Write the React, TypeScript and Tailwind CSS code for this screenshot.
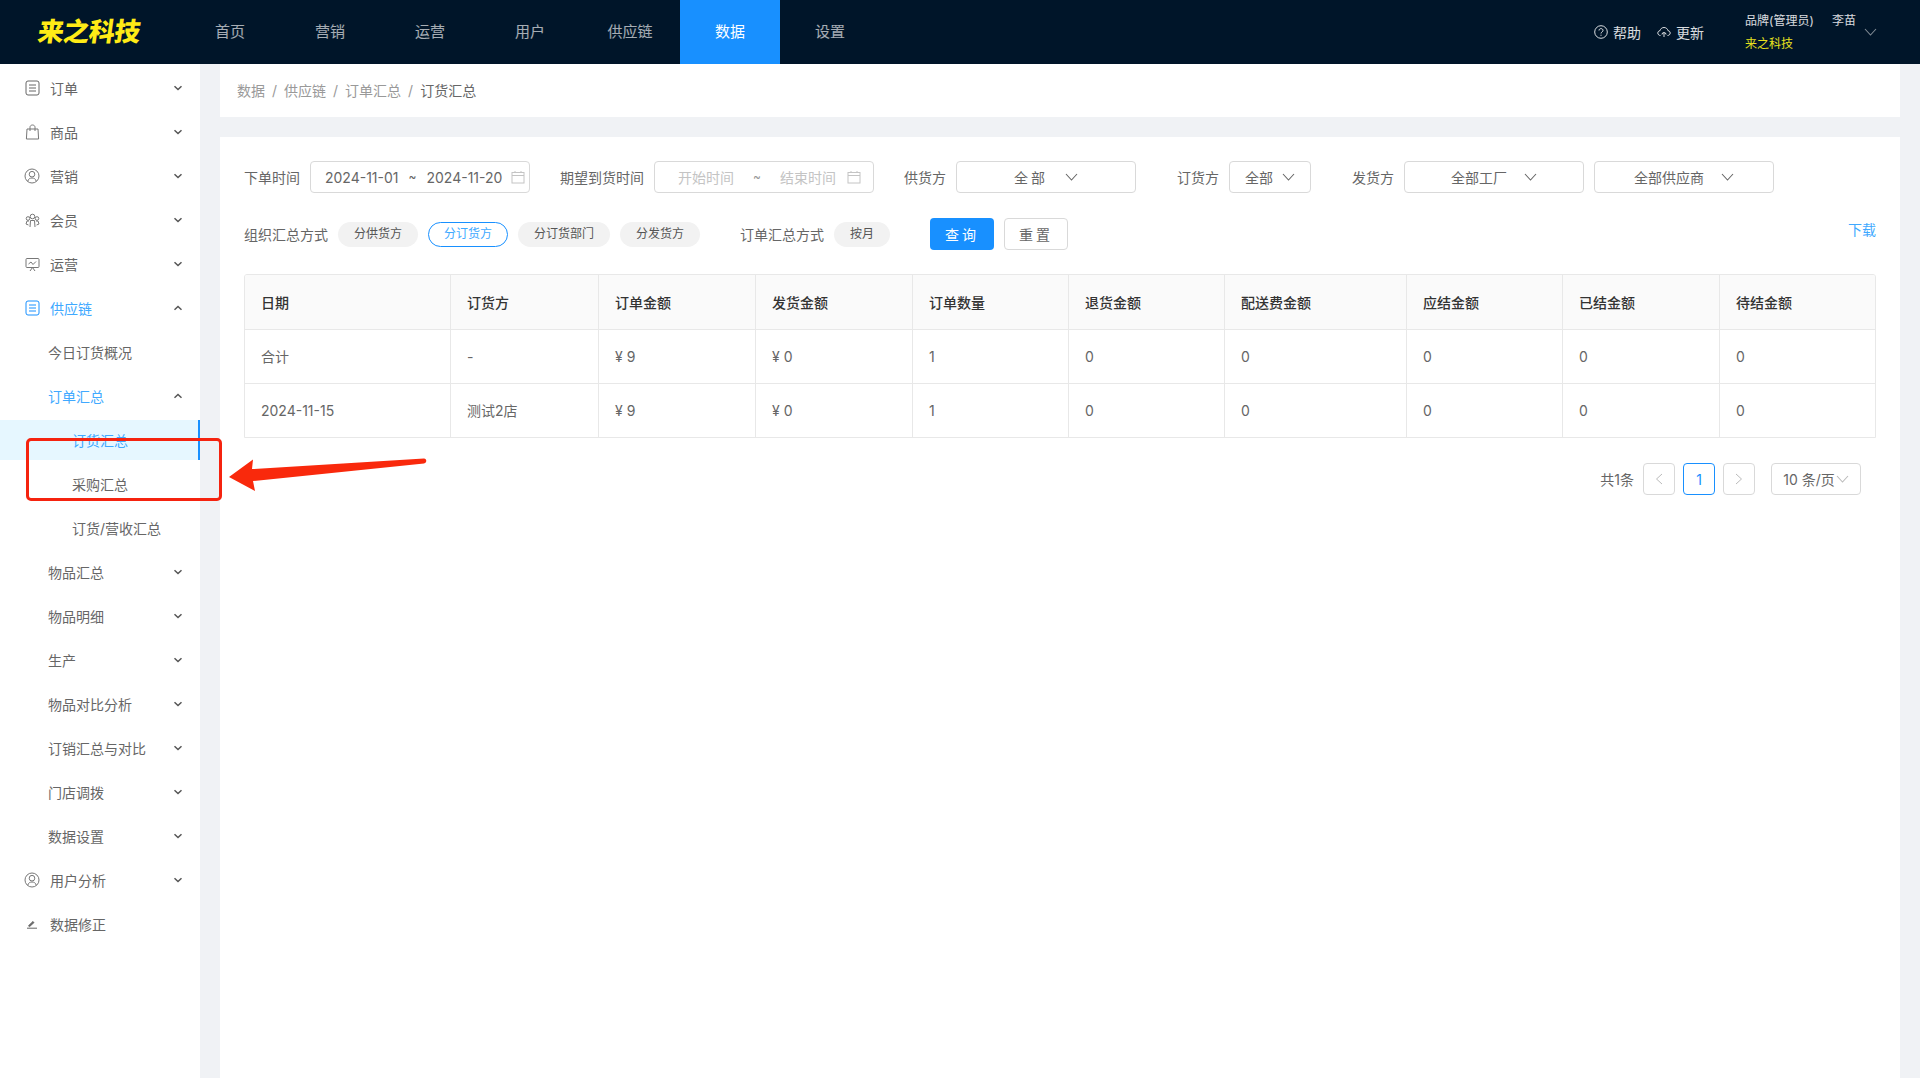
import React from "react";

const font = { fontFamily: 'Inter, "Noto Sans CJK SC", sans-serif' };

const Chevron = ({ up = false }: { up?: boolean }) => (
  <svg width="10" height="6" viewBox="0 0 10 6" className="text-[#555]">
    <path d={up ? "M1.5 4.8 5 1.5l3.5 3.3" : "M1.5 1.2 5 4.5l3.5-3.3"} fill="none" stroke="currentColor" strokeWidth="1.5" />
  </svg>
);

const Caret = ({ className = "text-[#666]" }: { className?: string }) => (
  <svg width="13" height="8" viewBox="0 0 13 8" className={className}>
    <path d="M1 1l5.5 6L12 1" fill="none" stroke="currentColor" strokeWidth="1.1" />
  </svg>
);

const DocIcon = () => (
  <svg width="15" height="16" viewBox="0 0 15 16" fill="none" stroke="currentColor" strokeWidth="1">
    <rect x="1" y="1" width="13" height="14" rx="2" />
    <path d="M4 5h7M4 8h7M4 11h7" />
  </svg>
);
const BagIcon = () => (
  <svg width="15" height="16" viewBox="0 0 15 16" fill="none" stroke="#777" strokeWidth="1">
    <path d="M2 5h11l.6 10H1.4zM5 7V3.2C5 2 6 1 7.5 1S10 2 10 3.2V7" />
  </svg>
);
const UserIcon = () => (
  <svg width="16" height="16" viewBox="0 0 16 16" fill="none" stroke="#777" strokeWidth="1">
    <circle cx="8" cy="8" r="7" />
    <circle cx="8" cy="6.2" r="2.8" />
    <path d="M3.8 13.2C4.4 10.8 6 10 8 10s3.6.8 4.2 3.2" />
  </svg>
);
const GroupIcon = () => (
  <svg width="15" height="15" viewBox="0 0 15 15" fill="none" stroke="#777" strokeWidth="1">
    <circle cx="7.5" cy="3.5" r="2.3" />
    <circle cx="3" cy="5.5" r="1.8" />
    <circle cx="12" cy="5.5" r="1.8" />
    <path d="M5 14l.5-6.5h4L10 14M1 11l1-3h2M14 11l-1-3h-2M1 11l2.5 1M14 11l-2.5 1" />
  </svg>
);
const ScreenIcon = () => (
  <svg width="15" height="15" viewBox="0 0 15 15" fill="none" stroke="#777" strokeWidth="1">
    <rect x="1" y="1.5" width="13" height="9" rx="1" />
    <path d="M3.5 7l2.5-2 2 2.5L11 4.5M5 14l2.5-3.5L10 14" />
  </svg>
);
const EditIcon = () => (
  <svg width="12" height="10" viewBox="0 0 12 10" fill="none" stroke="#666">
    <path d="M1 9.2h10" />
    <path d="M2.5 6.8 7 2.5l1 1-4.300 4z" fill="#666" />
  </svg>
);
const CalendarIcon = () => (
  <svg width="14" height="14" viewBox="0 0 14 14" fill="none" stroke="#c4c4c4">
    <rect x="1" y="2.500" width="12" height="10.500" />
    <path d="M1 5.500h12M4 1v2M10 1v2" />
  </svg>
);

type Item = {
  label: string;
  icon?: React.ReactNode;
  level?: number;
  arrow?: "up" | "down";
  open?: boolean;
  active?: boolean;
};

const menu: Item[] = [
  { label: "订单", icon: <span className="text-[#666] flex"><DocIcon /></span>, arrow: "down" },
  { label: "商品", icon: <BagIcon />, arrow: "down" },
  { label: "营销", icon: <UserIcon />, arrow: "down" },
  { label: "会员", icon: <GroupIcon />, arrow: "down" },
  { label: "运营", icon: <ScreenIcon />, arrow: "down" },
  { label: "供应链", icon: <span className="text-[#1890ff] flex"><DocIcon /></span>, arrow: "up", open: true },
  { label: "今日订货概况", level: 1 },
  { label: "订单汇总", level: 1, arrow: "up", open: true },
  { label: "订货汇总", level: 2, active: true },
  { label: "采购汇总", level: 2 },
  { label: "订货/营收汇总", level: 2 },
  { label: "物品汇总", level: 1, arrow: "down" },
  { label: "物品明细", level: 1, arrow: "down" },
  { label: "生产", level: 1, arrow: "down" },
  { label: "物品对比分析", level: 1, arrow: "down" },
  { label: "订销汇总与对比", level: 1, arrow: "down" },
  { label: "门店调拨", level: 1, arrow: "down" },
  { label: "数据设置", level: 1, arrow: "down" },
  { label: "用户分析", icon: <UserIcon />, arrow: "down" },
  { label: "数据修正", icon: <EditIcon /> },
];

const SideItem = ({ item }: { item: Item }) => {
  const pad = item.level === 2 ? "pl-[72px]" : item.level === 1 ? "pl-[48px]" : "pl-[50px]";
  const color = item.open || item.active ? "text-[#40a9ff]" : "text-[#666]";
  return (
    <div
      className={`relative my-1 flex h-10 items-center pr-[17px] text-[14px] ${pad} ${color} ${
        item.active ? "border-r-2 border-[#1890ff] bg-[#e6f7ff]" : ""
      }`}
    >
      {item.icon && <span className="absolute left-[24px] flex w-4 justify-center">{item.icon}</span>}
      <span className="flex-1">{item.label}</span>
      {item.arrow && <Chevron up={item.arrow === "up"} />}
    </div>
  );
};

const Label = ({ children, className = "" }: { children: React.ReactNode; className?: string }) => (
  <span className={`text-[14px] text-[#666] ${className}`}>{children}</span>
);

const Select = ({ text, width, spaced }: { text: string; width: string; spaced?: boolean }) => (
  <div className={`flex h-8 items-center justify-center gap-[17px] rounded-[4px] border border-[#d9d9d9] text-[14px] text-[#666] ${width}`}>
    <span className={spaced ? "tracking-[3px]" : ""}>{text}</span>
    <Caret />
  </div>
);

const Chip = ({ text, width, active }: { text: string; width: string; active?: boolean }) => (
  <div
    className={`flex h-[25px] items-center justify-center rounded-full text-[12px] ${width} ${
      active ? "border border-[#1890ff] text-[#40a9ff]" : "bg-[#f2f2f2] text-[#555]"
    }`}
  >
    {text}
  </div>
);

const columns = ["日期", "订货方", "订单金额", "发货金额", "订单数量", "退货金额", "配送费金额", "应结金额", "已结金额", "待结金额"];
const rows = [
  ["合计", "-", "¥ 9", "¥ 0", "1", "0", "0", "0", "0", "0"],
  ["2024-11-15", "测试2店", "¥ 9", "¥ 0", "1", "0", "0", "0", "0", "0"],
];
const gridCols = "grid grid-cols-[206px_148px_157px_157px_156px_156px_182px_156px_157px_157px]";

const PageBox = ({ children, active }: { children: React.ReactNode; active?: boolean }) => (
  <div
    className={`flex h-8 w-8 items-center justify-center rounded-[4px] border text-[14px] ${
      active ? "border-[#1890ff] text-[#1890ff]" : "border-[#d9d9d9] text-[#bbb]"
    }`}
  >
    {children}
  </div>
);

export default function App() {
  return (
    <div style={font} className="relative flex h-[1078px] w-full flex-col overflow-hidden bg-[#f0f2f5]">
      <header className="flex h-16 shrink-0 items-center bg-[#001529] text-white">
        <div className="flex w-[180px] justify-center pr-[1px]">
          <span className="origin-center skew-x-[-8deg] text-[26px] leading-none font-black tracking-[-0.5px] text-[#ffeb16]">来之科技</span>
        </div>
        {["首页", "营销", "运营", "用户", "供应链", "数据", "设置"].map((n) => (
          <div
            key={n}
            className={`flex h-16 w-[100px] items-center justify-center text-[15px] ${
              n === "数据" ? "bg-[#1890ff] text-white" : "text-white/65"
            }`}
          >
            {n}
          </div>
        ))}
        <div className="ml-auto flex items-center pr-[43px]">
          <div className="flex items-center gap-[5px] text-[14px] text-white/85">
            <svg width="14" height="14" viewBox="0 0 14 14" fill="none" stroke="currentColor">
              <circle cx="7" cy="7" r="6.300" />
              <path d="M5 5.500C5 4.300 6 3.600 7 3.600s2 .7 2 1.800C9 7 7 7 7 8.500M7 9.700v1.100" />
            </svg>
            帮助
          </div>
          <div className="ml-[16px] flex items-center gap-[5px] text-[14px] text-white/85">
            <svg width="14" height="12" viewBox="0 0 14 12" fill="none" stroke="currentColor">
              <path d="M3.500 9.500C2 9.500.8 8.400.8 7 .8 5.700 1.800 4.800 3 4.700 3.500 2.700 5 1.500 7 1.500s3.500 1.200 4 3.200c1.200.1 2.200 1 2.200 2.300 0 1.400-1.200 2.500-2.700 2.500" />
              <path d="M5 8.500a2 2 0 0 1 4 0M7 7v4" />
            </svg>
            更新
          </div>
          <div className="ml-[41px] flex w-[111px] flex-col gap-[7px] text-[12px] leading-4">
            <div className="flex justify-between text-white/85">
              <span>品牌(管理员)</span>
              <span>李苗</span>
            </div>
            <div className="text-[#e6e01e]">来之科技</div>
          </div>
          <Caret className="ml-[8px] text-white/50" />
        </div>
      </header>

      <div className="flex min-h-0 flex-1">
        <aside className="w-[200px] shrink-0 bg-white">
          {menu.map((m) => (
            <SideItem key={m.label} item={m} />
          ))}
        </aside>

        <main className="flex min-w-0 flex-1 flex-col px-5">
          <div className="flex h-[53px] shrink-0 items-center gap-[7px] bg-white pl-[17px] text-[14px] text-[#999]">
            <span>数据</span>
            <span>/</span>
            <span>供应链</span>
            <span>/</span>
            <span>订单汇总</span>
            <span>/</span>
            <span className="text-[#666]">订货汇总</span>
          </div>

          <section className="mt-5 flex-1 bg-white p-6">
            <div className="flex h-8 items-center">
              <Label className="w-[56px]">下单时间</Label>
              <div className="ml-[10px] flex h-8 w-[220px] items-center rounded-[4px] border border-[#d9d9d9] pl-[14px] pr-[4px] text-[14px] text-[#666]">
                <span>2024-11-01</span>
                <span className="mx-[10px] text-[12px]">~</span>
                <span>2024-11-20</span>
                <span className="ml-auto flex"><CalendarIcon /></span>
              </div>
              <Label className="ml-[30px] w-[84px]">期望到货时间</Label>
              <div className="ml-[10px] flex h-8 w-[220px] items-center rounded-[4px] border border-[#d9d9d9] pl-[23px] pr-[12px] text-[14px] text-[#c4c4c4]">
                <span>开始时间</span>
                <span className="ml-[19px] text-[12px] text-[#999]">~</span>
                <span className="ml-[19px]">结束时间</span>
                <span className="ml-auto flex"><CalendarIcon /></span>
              </div>
              <Label className="ml-[30px] w-[42px]">供货方</Label>
              <div className="ml-[10px]"><Select text="全部" width="w-[180px]" spaced /></div>
              <Label className="ml-[41px] w-[42px]">订货方</Label>
              <div className="ml-[10px]"><Select text="全部" width="w-[82px] !gap-[9px]" /></div>
              <Label className="ml-[41px] w-[42px]">发货方</Label>
              <div className="ml-[10px]"><Select text="全部工厂" width="w-[180px]" /></div>
              <div className="ml-[10px]"><Select text="全部供应商" width="w-[180px]" /></div>
            </div>

            <div className="mt-[25px] flex h-8 items-center">
              <Label className="w-[84px]">组织汇总方式</Label>
              <div className="ml-[10px] flex gap-[10px]">
                <Chip text="分供货方" width="w-[80px]" />
                <Chip text="分订货方" width="w-[80px]" active />
                <Chip text="分订货部门" width="w-[92px]" />
                <Chip text="分发货方" width="w-[80px]" />
              </div>
              <Label className="ml-[40px] w-[84px]">订单汇总方式</Label>
              <div className="ml-[10px]"><Chip text="按月" width="w-[56px]" /></div>
              <div className="ml-[40px] flex h-8 w-16 items-center justify-center rounded-[4px] bg-[#1890ff] text-[14px] tracking-[3px] text-white">查询</div>
              <div className="ml-[10px] flex h-8 w-16 items-center justify-center rounded-[4px] border border-[#d9d9d9] text-[14px] tracking-[3px] text-[#666]">重置</div>
              <span className="mb-[10px] ml-auto text-[14px] text-[#40a9ff]">下载</span>
            </div>

            <div className="mt-6 overflow-hidden rounded-t-[3px] border border-[#e8e8e8]">
              <div className={`${gridCols} h-[54px] bg-[#fafafa]`}>
                {columns.map((c, i) => (
                  <div key={c} className={`flex items-center pl-4 text-[14px] font-medium text-[#333] ${i < 9 ? "border-r border-[#e8e8e8]" : ""}`}>
                    {c}
                  </div>
                ))}
              </div>
              {rows.map((r, ri) => (
                <div key={ri} className={`${gridCols} h-[54px] border-t border-[#e8e8e8]`}>
                  {r.map((v, i) => (
                    <div key={i} className={`flex items-center pl-4 text-[14px] text-[#666] ${i < 9 ? "border-r border-[#e8e8e8]" : ""}`}>
                      {v}
                    </div>
                  ))}
                </div>
              ))}
            </div>

            <div className="mt-[25px] flex items-center justify-end gap-2 pr-[15px]">
              <span className="mr-[1px] text-[14px] text-[#666]">共1条</span>
              <PageBox>
                <svg width="8" height="12" viewBox="0 0 8 12" fill="none" stroke="currentColor"><path d="M7 1 1.500 6 7 11" /></svg>
              </PageBox>
              <PageBox active>1</PageBox>
              <PageBox>
                <svg width="8" height="12" viewBox="0 0 8 12" fill="none" stroke="currentColor"><path d="M1 1l5.500 5L1 11" /></svg>
              </PageBox>
              <div className="ml-2 flex h-8 w-[90px] items-center justify-center gap-[1px] rounded-[4px] border border-[#d9d9d9] text-[14px] text-[#666]">
                10 条/页
                <Caret className="text-[#bbb]" />
              </div>
            </div>
          </section>
        </main>
      </div>

      {/* red annotation over the page */}
      <div className="absolute left-[26px] top-[438px] h-[63px] w-[196px] rounded-[5px] border-[3px] border-[#f5230f]" />
      <svg className="absolute left-[225px] top-[450px]" width="205" height="50" viewBox="0 0 205 50">
        <path d="M4 27 28 9.500l-1 9.500L199 8.500c3 0 3 4.500 0 5L28 31l2 10z" fill="#f9290c" />
      </svg>
    </div>
  );
}
